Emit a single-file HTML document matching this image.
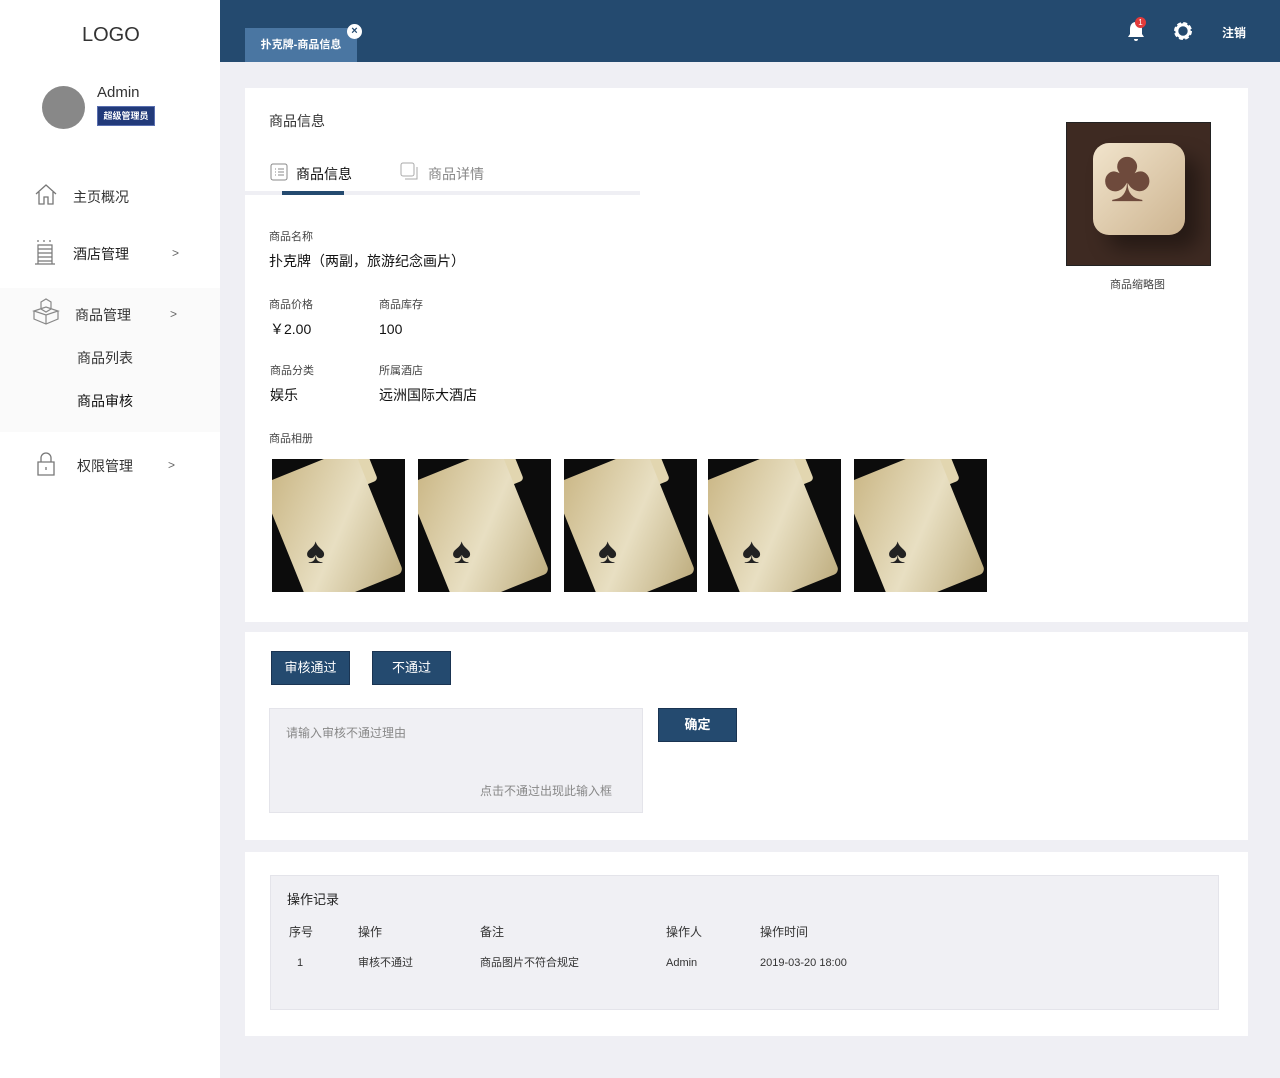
<!DOCTYPE html>
<html><head><meta charset="utf-8"><style>
*{margin:0;padding:0;box-sizing:border-box}
body{width:1280px;height:1078px;background:#efeff4;font-family:"Liberation Sans","Noto Sans CJK SC",sans-serif;color:#222;position:relative;overflow:hidden;font-size:14px}
.a{position:absolute;line-height:1.45}
.side{left:0;top:0;width:220px;height:1078px;background:#fff}
.hdr{left:220px;top:0;width:1060px;height:62px;background:#244a6f}
.card{background:#fff}
.lbl{font-size:11px;color:#444}
.val{font-size:14px;color:#111}
.btn{background:#244a6f;color:#fff;font-size:13px;text-align:center;line-height:32px !important;border:1px solid #1a3452}
.pic{width:133px;height:133px;background:#0c0c0c;overflow:hidden}
.pic div{position:absolute;left:10px;top:2px;width:100px;height:135px;background:linear-gradient(135deg,#c9b583,#e8dfc2 55%,#bfae80);transform:rotate(-22deg);border-radius:6px}
.pic i{position:absolute;left:60px;top:-10px;width:40px;height:40px;background:#e2d6b0;transform:rotate(-22deg);border-radius:4px}
.pic span{position:absolute;left:34px;top:66px;font-size:36px;color:#222}
.th{font-size:12px;color:#333}
.td{font-size:11px;color:#333}
</style></head><body>
<div class="a side"></div>
<div class="a" style="left:0;top:288px;width:220px;height:144px;background:#fafafa"></div>
<div class="a" style="left:82px;top:21px;font-size:20px;color:#333">LOGO</div>
<div class="a" style="left:42px;top:86px;width:43px;height:43px;border-radius:50%;background:#888"></div>
<div class="a" style="left:97px;top:82px;font-size:15px;color:#333">Admin</div>
<div class="a" style="left:97px;top:106px;width:58px;height:20px;background:#223a7a;border:1px solid #5a6fb0;color:#fff;font-size:9px;line-height:18px;text-align:center;font-weight:bold">超级管理员</div>
<svg class="a" style="left:34px;top:183px" width="24" height="24" viewBox="0 0 24 24" fill="none" stroke="#777" stroke-width="1.3"><path d="M2 11L12 2l10 9M5 9v12h5v-7h4v7h5V9"/></svg>
<div class="a" style="left:73px;top:187px;font-size:14px;color:#333">主页概况</div>
<svg class="a" style="left:34px;top:237px" width="22" height="28" viewBox="0 0 22 28" fill="none" stroke="#777" stroke-width="1.2"><path d="M3 4h2M9 4h2M15 4h2M4 8h14v19H4zM4 12h14M4 16h14M4 20h14M4 24h14M1 27h20"/></svg>
<div class="a" style="left:73px;top:244px;font-size:14px;color:#222">酒店管理</div>
<div class="a" style="left:172px;top:245px;font-size:12px;color:#666">&gt;</div>
<svg class="a" style="left:32px;top:298px" width="28" height="28" viewBox="0 0 28 28" fill="none" stroke="#888" stroke-width="1.2"><path d="M9 4l5-3 5 3v7l-5 3-5-3zM2 13l12-4 12 4-12 4zM2 13v8l12 5 12-5v-8M14 17v9"/></svg>
<div class="a" style="left:75px;top:305px;font-size:14px;color:#333">商品管理</div>
<div class="a" style="left:170px;top:306px;font-size:12px;color:#666">&gt;</div>
<div class="a" style="left:77px;top:348px;font-size:14px;color:#333">商品列表</div>
<div class="a" style="left:77px;top:391px;font-size:14px;color:#111">商品审核</div>
<svg class="a" style="left:36px;top:452px" width="20" height="24" viewBox="0 0 20 24" fill="none" stroke="#777" stroke-width="1.3"><path d="M5 10V6a5 5 0 0110 0v4M2 10h16v13H2zM10 15v3"/></svg>
<div class="a" style="left:77px;top:456px;font-size:14px;color:#333">权限管理</div>
<div class="a" style="left:168px;top:457px;font-size:12px;color:#666">&gt;</div>

<div class="a hdr"></div>
<div class="a" style="left:245px;top:28px;width:112px;height:34px;background:#4a76a2;color:#fff;font-size:11px;line-height:34px;text-align:center;font-weight:bold">扑克牌-商品信息</div>
<div class="a" style="left:347px;top:24px;width:15px;height:15px;border-radius:50%;background:#fff;color:#244a6f;font-size:11px;line-height:15px;text-align:center;font-weight:bold">×</div>
<svg class="a" style="left:1126px;top:20px" width="20" height="22" viewBox="0 0 20 22"><path d="M10 2c-4 0-6 3-6 7v5l-2 3h16l-2-3V9c0-4-2-7-6-7zM8 19h4a2 2 0 01-4 0z" fill="#fff"/></svg>
<div class="a" style="left:1135px;top:17px;width:11px;height:11px;border-radius:50%;background:#e23b3b;color:#fff;font-size:8px;line-height:11px;text-align:center">1</div>
<svg class="a" style="left:1172px;top:20px" width="22" height="22" viewBox="0 0 22 22"><circle cx="11" cy="11" r="7" fill="none" stroke="#fff" stroke-width="4" stroke-dasharray="3.5 2"/><circle cx="11" cy="11" r="6.2" fill="none" stroke="#fff" stroke-width="3"/></svg>
<div class="a" style="left:1222px;top:25px;color:#fff;font-size:12px;font-weight:bold">注销</div>

<div class="a card" style="left:245px;top:88px;width:1003px;height:534px"></div>
<div class="a" style="left:269px;top:111px;font-size:14px;color:#333">商品信息</div>
<svg class="a" style="left:270px;top:163px" width="18" height="18" viewBox="0 0 18 18" fill="none" stroke="#888"><rect x="1" y="1" width="16" height="16" rx="2"/><path d="M5 6h1M8 6h6M5 9h1M8 9h6M5 12h1M8 12h6"/></svg>
<div class="a" style="left:296px;top:164px;font-size:14px;color:#111">商品信息</div>
<svg class="a" style="left:400px;top:162px" width="19" height="19" viewBox="0 0 19 19" fill="none" stroke="#aaa"><rect x="1" y="1" width="13" height="13" rx="2"/><path d="M5 17h12V5"/></svg>
<div class="a" style="left:428px;top:164px;font-size:14px;color:#888">商品详情</div>
<div class="a" style="left:245px;top:191px;width:395px;height:4px;background:#efeff4"></div>
<div class="a" style="left:282px;top:191px;width:62px;height:4px;background:#244a6f"></div>
<div class="a lbl" style="left:269px;top:230px">商品名称</div>
<div class="a val" style="left:269px;top:251px">扑克牌（两副，旅游纪念画片）</div>
<div class="a lbl" style="left:269px;top:298px">商品价格</div>
<div class="a val" style="left:270px;top:319px">￥2.00</div>
<div class="a lbl" style="left:379px;top:298px">商品库存</div>
<div class="a val" style="left:379px;top:319px">100</div>
<div class="a lbl" style="left:270px;top:364px">商品分类</div>
<div class="a val" style="left:270px;top:385px">娱乐</div>
<div class="a lbl" style="left:379px;top:364px">所属酒店</div>
<div class="a val" style="left:379px;top:385px">远洲国际大酒店</div>
<div class="a lbl" style="left:269px;top:432px">商品相册</div>
<div class="a pic" style="left:272px;top:459px"><i></i><div></div><span>♠</span></div>
<div class="a pic" style="left:418px;top:459px"><i></i><div></div><span>♠</span></div>
<div class="a pic" style="left:564px;top:459px"><i></i><div></div><span>♠</span></div>
<div class="a pic" style="left:708px;top:459px"><i></i><div></div><span>♠</span></div>
<div class="a pic" style="left:854px;top:459px"><i></i><div></div><span>♠</span></div>
<div class="a" style="left:1066px;top:122px;width:145px;height:144px;background:#3e2a22;border:1px solid #222;overflow:hidden">
 <div class="a" style="left:26px;top:20px;width:92px;height:92px;border-radius:16px;background:linear-gradient(135deg,#f1e4cc,#cdb490);box-shadow:14px 14px 20px rgba(0,0,0,.4)"></div>
 <div class="a" style="left:36px;top:16px;font-size:74px;line-height:1;color:#6e4a3c">♣</div>
</div>
<div class="a" style="left:1110px;top:278px;font-size:11px;color:#444">商品缩略图</div>

<div class="a card" style="left:245px;top:632px;width:1003px;height:208px"></div>
<div class="a btn" style="left:271px;top:651px;width:79px;height:34px">审核通过</div>
<div class="a btn" style="left:372px;top:651px;width:79px;height:34px">不通过</div>
<div class="a" style="left:269px;top:708px;width:374px;height:105px;background:#f0f0f4;border:1px solid #e4e4ea"></div>
<div class="a" style="left:286px;top:725px;font-size:12px;color:#888">请输入审核不通过理由</div>
<div class="a" style="left:480px;top:783px;font-size:12px;color:#888">点击不通过出现此输入框</div>
<div class="a btn" style="left:658px;top:708px;width:79px;height:34px;font-weight:bold">确定</div>

<div class="a card" style="left:245px;top:852px;width:1003px;height:184px"></div>
<div class="a" style="left:270px;top:875px;width:949px;height:135px;background:#f0f0f4;border:1px solid #e4e4ea"></div>
<div class="a" style="left:287px;top:891px;font-size:13px;color:#222">操作记录</div>
<div class="a th" style="left:289px;top:924px">序号</div>
<div class="a th" style="left:358px;top:924px">操作</div>
<div class="a th" style="left:480px;top:924px">备注</div>
<div class="a th" style="left:666px;top:924px">操作人</div>
<div class="a th" style="left:760px;top:924px">操作时间</div>
<div class="a td" style="left:297px;top:956px">1</div>
<div class="a td" style="left:358px;top:956px">审核不通过</div>
<div class="a td" style="left:480px;top:956px">商品图片不符合规定</div>
<div class="a td" style="left:666px;top:956px">Admin</div>
<div class="a td" style="left:760px;top:956px">2019-03-20 18:00</div>
</body></html>
